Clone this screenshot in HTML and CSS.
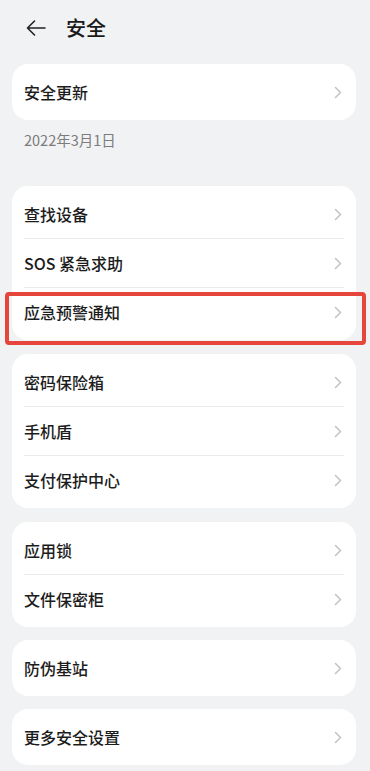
FILE: index.html
```html
<!DOCTYPE html>
<html lang="zh-CN">
<head>
<meta charset="utf-8">
<meta name="viewport" content="width=device-width, initial-scale=1">
<title>安全</title>
<link rel="stylesheet" href="styles.css">
</head>
<body>
<div class="page">
  <header class="topbar">
    <svg class="back" width="20" height="16" viewBox="0 0 20 16" aria-hidden="true">
      <path d="M1.5 8 H19 M8.5 1 L1.5 8 L8.5 15" fill="none" stroke="#222" stroke-width="1.6" stroke-linecap="round" stroke-linejoin="round"/>
    </svg>
    <h1 class="title">安全</h1>
  </header>

  <section class="card">
    <div class="row"><span class="label">安全更新</span><svg class="chev" width="8" height="13" viewBox="0 0 8 13"><path d="M1.5 1.5 L6.5 6.5 L1.5 11.5" fill="none" stroke="#c2c2c2" stroke-width="1.5" stroke-linecap="round" stroke-linejoin="round"/></svg></div>
  </section>
  <p class="date">2022年3月1日</p>

  <section class="card card-first">
    <div class="row"><span class="label">查找设备</span><svg class="chev" width="8" height="13" viewBox="0 0 8 13"><path d="M1.5 1.5 L6.5 6.5 L1.5 11.5" fill="none" stroke="#c2c2c2" stroke-width="1.5" stroke-linecap="round" stroke-linejoin="round"/></svg></div>
    <div class="row"><span class="label">SOS 紧急求助</span><svg class="chev" width="8" height="13" viewBox="0 0 8 13"><path d="M1.5 1.5 L6.5 6.5 L1.5 11.5" fill="none" stroke="#c2c2c2" stroke-width="1.5" stroke-linecap="round" stroke-linejoin="round"/></svg></div>
    <div class="row"><span class="label">应急预警通知</span><svg class="chev" width="8" height="13" viewBox="0 0 8 13"><path d="M1.5 1.5 L6.5 6.5 L1.5 11.5" fill="none" stroke="#c2c2c2" stroke-width="1.5" stroke-linecap="round" stroke-linejoin="round"/></svg><span class="highlight"></span></div>
  </section>

  <section class="card">
    <div class="row"><span class="label">密码保险箱</span><svg class="chev" width="8" height="13" viewBox="0 0 8 13"><path d="M1.5 1.5 L6.5 6.5 L1.5 11.5" fill="none" stroke="#c2c2c2" stroke-width="1.5" stroke-linecap="round" stroke-linejoin="round"/></svg></div>
    <div class="row"><span class="label">手机盾</span><svg class="chev" width="8" height="13" viewBox="0 0 8 13"><path d="M1.5 1.5 L6.5 6.5 L1.5 11.5" fill="none" stroke="#c2c2c2" stroke-width="1.5" stroke-linecap="round" stroke-linejoin="round"/></svg></div>
    <div class="row"><span class="label">支付保护中心</span><svg class="chev" width="8" height="13" viewBox="0 0 8 13"><path d="M1.5 1.5 L6.5 6.5 L1.5 11.5" fill="none" stroke="#c2c2c2" stroke-width="1.5" stroke-linecap="round" stroke-linejoin="round"/></svg></div>
  </section>

  <section class="card">
    <div class="row"><span class="label">应用锁</span><svg class="chev" width="8" height="13" viewBox="0 0 8 13"><path d="M1.5 1.5 L6.5 6.5 L1.5 11.5" fill="none" stroke="#c2c2c2" stroke-width="1.5" stroke-linecap="round" stroke-linejoin="round"/></svg></div>
    <div class="row"><span class="label">文件保密柜</span><svg class="chev" width="8" height="13" viewBox="0 0 8 13"><path d="M1.5 1.5 L6.5 6.5 L1.5 11.5" fill="none" stroke="#c2c2c2" stroke-width="1.5" stroke-linecap="round" stroke-linejoin="round"/></svg></div>
  </section>

  <section class="card card-tight">
    <div class="row"><span class="label">防伪基站</span><svg class="chev" width="8" height="13" viewBox="0 0 8 13"><path d="M1.5 1.5 L6.5 6.5 L1.5 11.5" fill="none" stroke="#c2c2c2" stroke-width="1.5" stroke-linecap="round" stroke-linejoin="round"/></svg></div>
  </section>

  <section class="card card-tight">
    <div class="row"><span class="label">更多安全设置</span><svg class="chev" width="8" height="13" viewBox="0 0 8 13"><path d="M1.5 1.5 L6.5 6.5 L1.5 11.5" fill="none" stroke="#c2c2c2" stroke-width="1.5" stroke-linecap="round" stroke-linejoin="round"/></svg></div>
  </section>
</div>
</body>
</html>
```

FILE: styles.css
```css
* {
  box-sizing: border-box;
}

html, body {
  margin: 0;
  padding: 0;
  background: #f1f2f4;
}

body {
  font-family: "Noto Sans CJK SC", "Noto Sans", "Liberation Sans", sans-serif;
  color: #1c1c1c;
  width: 370px;
  height: 771px;
  overflow: hidden;
}

.page {
  display: flex;
  flex-direction: column;
}

.topbar {
  height: 64px;
  display: flex;
  align-items: center;
  padding: 0 0 8px 26px;
  gap: 20px;
}

.back {
  display: block;
  flex: none;
}

.title {
  margin: 0;
  font-size: 20px;
  font-weight: 500;
  line-height: 28px;
  color: #1a1a1a;
}

.card {
  margin: 14px 14px 0 12px;
  background: #ffffff;
  border-radius: 16px;
  padding: 4px 0;
  display: flex;
  flex-direction: column;
}

.page > .card:nth-child(2) {
  margin-top: 0;
}

.card-first {
  margin-top: 36px;
}

.card-tight {
  margin-top: 13px;
}

.row {
  position: relative;
  height: 48px;
  margin: 0 12px;
  padding: 0 2px 0 0;
  display: flex;
  align-items: center;
  justify-content: space-between;
}

.row + .row {
  height: 49px;
  border-top: 1px solid #ebebeb;
}

.label {
  font-size: 16px;
  font-weight: 500;
  line-height: 22px;
  color: #1c1c1c;
}

.chev {
  display: block;
  flex: none;
}

.date {
  margin: 10px 0 0 24px;
  font-size: 14.5px;
  line-height: 20px;
  color: #7c7c7c;
}

.highlight {
  position: absolute;
  top: 4px;
  bottom: -9px;
  left: -19px;
  right: -22px;
  border: 4px solid #e5453a;
  border-radius: 4px;
  pointer-events: none;
}
```
